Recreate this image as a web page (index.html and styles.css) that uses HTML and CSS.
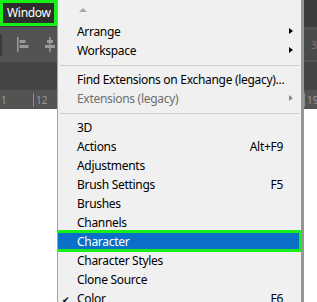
FILE: index.html
```html
<!DOCTYPE html>
<html lang="en">
<head>
    <meta charset="UTF-8">
    <title>Window menu</title>
    <link rel="stylesheet" href="styles.css">
</head>
<body>
    <div id="app">
        <div id="menubar">
            <span class="menu-title">Window</span>
        </div>
        <div id="options-bar">
            <span class="divider"></span>
            <svg class="align-icon" width="12" height="15" viewBox="0 0 12 15">
                <rect x="0" y="0" width="1.5" height="15" fill="#9a9a9a"/>
                <rect x="2.5" y="3" width="6" height="3" fill="#9a9a9a"/>
                <rect x="2.5" y="8" width="9" height="3" fill="#9a9a9a"/>
            </svg>
            <svg class="align-icon" width="12" height="15" viewBox="0 0 12 15">
                <rect x="5.2" y="0" width="1.5" height="15" fill="#9a9a9a"/>
                <rect x="3" y="3" width="6" height="3" fill="#9a9a9a"/>
                <rect x="1" y="8" width="10" height="3" fill="#9a9a9a"/>
            </svg>
            <span class="right-box">3</span>
        </div>
        <div id="doc-tabs"></div>
        <div id="ruler">
            <span class="tick">1</span>
            <span class="tick tick-12">12</span>
            <span class="tick tick-19">19</span>
        </div>
        <div id="canvas"></div>

        <div id="dropdown">
            <div class="scroll-up"><span class="up-arrow"></span></div>
            <div class="item has-sub">Arrange</div>
            <div class="item has-sub">Workspace</div>
            <div class="separator"></div>
            <div class="item">Find Extensions on Exchange (legacy)...</div>
            <div class="item has-sub disabled">Extensions (legacy)</div>
            <div class="separator"></div>
            <div class="item">3D</div>
            <div class="item">Actions<span class="shortcut">Alt+F9</span></div>
            <div class="item">Adjustments</div>
            <div class="item">Brush Settings<span class="shortcut">F5</span></div>
            <div class="item">Brushes</div>
            <div class="item">Channels</div>
            <div class="item selected">Character</div>
            <div class="item">Character Styles</div>
            <div class="item">Clone Source</div>
            <div class="item checked">Color<span class="shortcut">F6</span></div>
        </div>
    </div>
</body>
</html>
```

FILE: styles.css
```css
body {
    margin: 0;
    padding: 0;
    background-color: #ffffff;
    font-family: 'Noto Sans', 'Open Sans', sans-serif;
    overflow: hidden;
}

#app {
    position: relative;
    width: 317px;
    height: 302px;
    display: flex;
    flex-direction: column;
}

#menubar {
    height: 27px;
    background-color: #3d3d3d;
    display: flex;
    align-items: flex-start;
}

.menu-title {
    box-sizing: border-box;
    width: 57px;
    height: 26px;
    border: 3px solid #16f016;
    background-color: #2e2e2e;
    color: #ffffff;
    font-size: 12px;
    letter-spacing: -0.3px;
    line-height: 20px;
    padding-left: 4px;
}

#options-bar {
    height: 35px;
    background-color: #535353;
    display: flex;
    align-items: center;
    gap: 15px;
    position: relative;
}

#options-bar .divider {
    width: 2px;
    height: 22px;
    background-color: #3b3b3b;
}

.right-box {
    margin-left: auto;
    width: 14px;
    height: 30px;
    background-color: #4a4a4a;
    color: #7a7a7a;
    font-size: 11px;
    line-height: 30px;
    text-align: right;
}

#doc-tabs {
    height: 28px;
    background-color: #454545;
}

#ruler {
    height: 19px;
    background-color: #535353;
    position: relative;
    font-size: 10px;
    color: #9a9a9a;
}

.tick {
    position: absolute;
    top: 3px;
    left: -2px;
    border-left: 1px solid #8a8a8a;
    padding-left: 2px;
    line-height: 14px;
}

.tick-12 {
    left: 33px;
}

.tick-19 {
    left: 304px;
}

#canvas {
    flex-grow: 1;
    background-color: #ffffff;
}

/* menu opened over the workspace */
#dropdown {
    position: absolute;
    top: 0;
    left: 57px;
    width: 243px;
    height: 302px;
    overflow: hidden;
    background-color: #f0f0f0;
    border-left: 1px solid #a3a3a3;
    border-right: 3px solid #969696;
}

.scroll-up {
    height: 22px;
    position: relative;
}

.up-arrow {
    position: absolute;
    left: 21px;
    top: 8px;
    width: 0;
    height: 0;
    border-left: 4px solid transparent;
    border-right: 4px solid transparent;
    border-bottom: 4px solid #a8a8a8;
}

.item {
    position: relative;
    height: 19px;
    line-height: 19px;
    padding-left: 19px;
    padding-right: 18px;
    font-size: 12px;
    letter-spacing: -0.3px;
    color: #000000;
    display: flex;
    justify-content: space-between;
    white-space: nowrap;
}

.item.disabled {
    color: #6d6d6d;
}

.has-sub::after {
    content: '';
    position: absolute;
    right: 8px;
    top: 6px;
    border-top: 3.5px solid transparent;
    border-bottom: 3.5px solid transparent;
    border-left: 4px solid #000000;
}

.has-sub.disabled::after {
    border-left-color: #8a8a8a;
}

.separator {
    height: 1px;
    background-color: #cdcdcd;
    margin: 5px 2px 4px 2px;
}

.selected {
    background-color: #0a70c8;
    color: #ffffff;
}

.selected::before {
    content: '';
    position: absolute;
    left: -3px;
    top: -2px;
    right: -1px;
    bottom: -1px;
    border: 3px solid #16f016;
}

.checked::before {
    content: '\2714';
    position: absolute;
    left: 4px;
    top: 1px;
    font-size: 9px;
    color: #000000;
}
```
